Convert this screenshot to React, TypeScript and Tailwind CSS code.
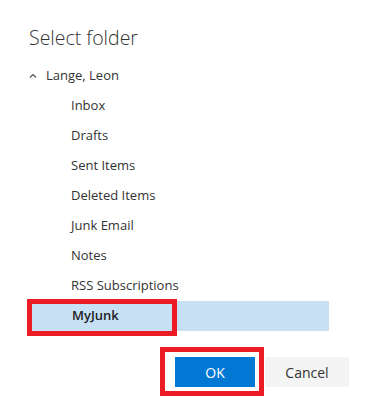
const folders = [
  "Inbox",
  "Drafts",
  "Sent Items",
  "Deleted Items",
  "Junk Email",
  "Notes",
  "RSS Subscriptions",
];

const font = { fontFamily: '"Segoe UI", "Open Sans", "Noto Sans", sans-serif' };

export default function App() {
  return (
    <div className="h-[406px] w-[377px] bg-white text-[#333333]" style={font}>
      <div className="pt-[24px] pl-[29px]">
        <h1 className="text-[19.5px] leading-[28px] font-light text-[#333333]">Select folder</h1>
      </div>

      <div className="mt-[9px] ml-[27px] w-[302px]">
        <div className="flex h-[30px] items-center text-[13px]">
          <svg width="10" height="10" viewBox="0 0 10 10" className="ml-[1px] mr-[8px]">
            <path d="M2 6.5 L5 3.5 L8 6.5" fill="none" stroke="#555" strokeWidth="1.2" />
          </svg>
          <span>Lange, Leon</span>
        </div>

        {folders.map((name) => (
          <div key={name} className="flex h-[30px] items-center pl-[44px] text-[13px]">
            {name}
          </div>
        ))}

        <div className="relative flex h-[30px] items-center bg-[#c7e0f4] pl-[45px] text-[13px] font-semibold text-[#222]">
          MyJunk
          <div className="pointer-events-none absolute left-0 top-[-2px] h-[37px] w-[150px] border-[5px] border-[#ed1c24]" />
        </div>
      </div>

      <div className="mt-[26px] flex justify-end gap-[10px] pr-[28px]">
        <div className="relative">
          <button className="h-[30px] w-[80px] bg-[#0078d4] text-[14px] text-white">OK</button>
          <div className="pointer-events-none absolute left-[-15px] top-[-10px] h-[49px] w-[104px] border-[5px] border-[#ed1c24]" />
        </div>
        <button className="h-[30px] w-[84px] bg-[#f4f4f4] text-[14px] text-[#333333]">Cancel</button>
      </div>
    </div>
  );
}
